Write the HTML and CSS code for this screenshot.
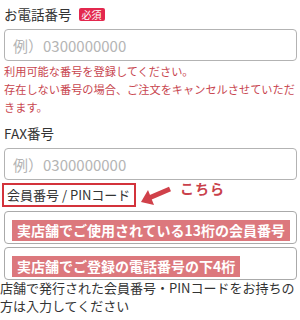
FILE: index.html
```html
<!DOCTYPE html>
<html lang="ja">
<head>
    <meta charset="UTF-8">
    <meta name="viewport" content="width=device-width, initial-scale=1.0">
    <title>会員情報</title>
    <link rel="stylesheet" href="styles.css">
</head>
<body>
    <div class="campo">
        <div class="titulo">お電話番号 <span class="requerido">必須</span></div>
        <input class="entrada" type="text" placeholder="例）0300000000">
        <p class="error">利用可能な番号を登録してください。<br>存在しない番号の場合、ご注文をキャンセルさせていただきます。</p>
    </div>
    <div class="campo">
        <div class="titulo fax">FAX番号</div>
        <input class="entrada" type="text" placeholder="例）0300000000">
    </div>
    <div class="filanota">
        <div class="marcado">会員番号 / PINコード</div>
        <svg class="flecha" width="32" height="20" viewBox="0 0 32 20">
            <line x1="30" y1="4" x2="9" y2="13" stroke="#d0414a" stroke-width="5"/>
            <polygon points="1,17 8,5 14,20" fill="#d0414a"/>
        </svg>
        <span class="aqui">こちら</span>
    </div>
    <div class="caja"><span class="barra">実店舗でご使用されている13桁の会員番号</span></div>
    <div class="caja"><span class="barra">実店舗でご登録の電話番号の下4桁</span></div>
    <p class="pie">店舗で発行された会員番号・PINコードをお持ちの<br>方は入力してください</p>
</body>
</html>
```

FILE: styles.css
```css
* {
    box-sizing: border-box;
    padding: 0;
    margin: 0;
}

body {
    width: 300px;
    padding: 5px 3px 0 4px;
    font-family: "Noto Sans CJK JP", "Noto Sans", sans-serif;
    color: #333;
    background: #fff;
}

.titulo {
    font-size: 13.5px;
    line-height: 18px;
    display: flex;
    align-items: center;
    gap: 7px;
}

.fax {
    margin-top: 8px;
}

.requerido {
    background-color: #e3284e;
    color: #fff;
    font-size: 10px;
    line-height: 13px;
    padding: 0 3px;
    border-radius: 2px;
}

.entrada {
    display: block;
    width: 100%;
    height: 32px;
    margin-top: 6px;
    border: 1px solid #b3b3b3;
    border-radius: 4px;
    padding-left: 8px;
    font-family: inherit;
    font-size: 15px;
}

.entrada::placeholder {
    color: #b5b5b5;
}

.error {
    margin-top: 1px;
    font-size: 11.2px;
    line-height: 18px;
    color: #c8464f;
}

.filanota {
    display: flex;
    align-items: flex-start;
    margin: 3px 0 0 -2px;
}

.marcado {
    width: 134px;
    height: 24px;
    border: 2px solid #d3333b;
    font-size: 13px;
    line-height: 20px;
    padding-left: 3px;
    white-space: nowrap;
}

.flecha {
    margin: 2px 0 0 4px;
}

.aqui {
    margin: -5px 0 0 8px;
    font-size: 14px;
    font-weight: bold;
    color: #c9414b;
    letter-spacing: 1px;
}

.caja {
    height: 33px;
    margin-top: 4px;
    border: 1px solid #aaa;
    border-radius: 4px;
    padding: 5px 0 0 7px;
}

.caja + .caja {
    margin-top: 3px;
}

.barra {
    display: inline-block;
    background-color: #dc787d;
    color: #fff;
    font-size: 14px;
    font-weight: bold;
    line-height: 21px;
    padding: 0 5px;
}

.pie {
    margin: -1px 0 0 -4px;
    font-size: 13px;
    line-height: 18px;
    color: #333;
    white-space: nowrap;
}
```
